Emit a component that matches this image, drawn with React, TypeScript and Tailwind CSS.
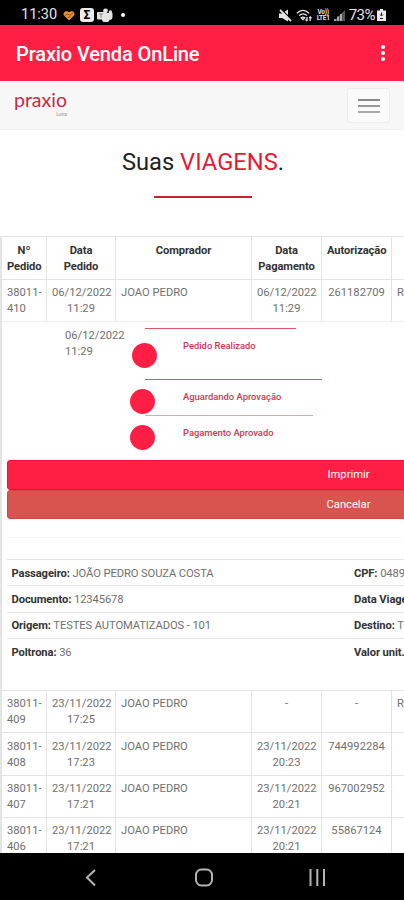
import { clsx } from 'clsx'

const columns = ['Nº Pedido', 'Data Pedido', 'Comprador', 'Data Pagamento', 'Autorização', '']

const currentOrder = ['38011-410', '06/12/2022 11:29', 'JOAO PEDRO', '06/12/2022 11:29', '261182709', 'R']

const orders = [
  ['38011-409', '23/11/2022 17:25', 'JOAO PEDRO', '-', '-', 'R'],
  ['38011-408', '23/11/2022 17:23', 'JOAO PEDRO', '23/11/2022 20:23', '744992284', ''],
  ['38011-407', '23/11/2022 17:21', 'JOAO PEDRO', '23/11/2022 20:21', '967002952', ''],
  ['38011-406', '23/11/2022 17:21', 'JOAO PEDRO', '23/11/2022 20:21', '55867124', ''],
]

const steps = [
  { label: 'Pedido Realizado', row: 'h-[51px]', line: 'w-[151px] bg-[#e0556b]', dot: '-ml-[13px] mr-[26px] mt-[14px]' },
  { label: 'Aguardando Aprovação', row: 'h-9', line: 'w-[177px] bg-[#d6566b]', dot: '-ml-[15px] mr-[28px] mt-[9px]' },
  { label: 'Pagamento Aprovado', row: 'h-[46px]', line: 'w-[168px] bg-[#f3a0ad]', dot: '-ml-[15px] mr-[28px] mt-[9px]' },
]

const details = [
  ['Passageiro:', 'JOÃO PEDRO SOUZA COSTA', 'CPF:', '0489'],
  ['Documento:', '12345678', 'Data Viagem:', ''],
  ['Origem:', 'TESTES AUTOMATIZADOS - 101', 'Destino:', 'TESTES'],
  ['Poltrona:', '36', 'Valor unit.:', ''],
]

function StatusBar() {
  return (
    <div className="flex h-[25px] shrink-0 items-center justify-between bg-black pl-[21px] pr-[18px] pt-[5px] text-[#e4e4e4]">
      <div className="flex items-center">
        <span className="w-[37px] text-[14.5px] leading-4">11:30</span>
        <svg viewBox="0 0 12 11" className="ml-[5px] h-[11px] w-3">
          <path d="M6 10.5 1 5.5C-.8 3.2 2.4-.8 6 2.3 9.6-.8 12.8 3.2 11 5.5Z" fill="#e8903c" />
          <path d="M2 5.5 5 3.8l1.5 1.5L10 3M4.5 8l3-2" stroke="#7a4210" strokeWidth=".8" fill="none" />
        </svg>
        <span className="ml-[5px] flex h-[14px] w-[14px] items-center justify-center rounded-[3px] bg-[#ececec] text-[12px] font-bold leading-none text-black">Σ</span>
        <svg viewBox="0 0 16 14" className="ml-[3px] h-[14px] w-4" fill="#e4e4e4">
          <circle cx="8.5" cy="2.8" r="2.4" />
          <circle cx="13.4" cy="4" r="1.7" />
          <path d="M5 5h10.5v4.5a3 3 0 0 1-3 2.5A4 4 0 0 1 5 12Z" />
          <rect y="4" width="8" height="7.5" rx="1" />
          <path d="M2 6h4M4 6v4" stroke="#888" strokeWidth="1" />
        </svg>
        <span className="ml-[8px] h-1 w-1 rounded-full bg-white" />
      </div>
      <div className="flex items-center">
        <svg viewBox="0 0 13 13" className="h-[13px] w-[13px]">
          <path d="M0 4.5h3L9 .5v12L3 9H0Z" fill="#e4e4e4" />
          <path d="m2 0 11 11" stroke="#000" strokeWidth="1.2" />
          <path d="m1 1 11 11" stroke="#e4e4e4" strokeWidth="1.8" />
        </svg>
        <svg viewBox="0 0 16 13" className="ml-[4px] h-[13px] w-4" fill="none" stroke="#e4e4e4" strokeWidth="1.3">
          <path d="M.8 4.2Q7-1.4 13.2 4.2M3 6.6Q7 3.2 11 6.6M5.2 8.8Q7 7.4 8.8 8.8L7 10.6Z" />
          <path d="M11 12V8m-1.5 2.5L11 12M14.2 8v4m-1-3 1-1 1.3 1.3" />
        </svg>
        <span className="ml-[4px] flex w-[15px] flex-col text-center text-[6.5px] font-bold leading-[6.5px] tracking-[-0.3px]">
          <span>Vo))</span>
          <span>LTE1</span>
        </span>
        <svg viewBox="0 0 11 11" className="ml-[3px] h-[11px] w-[11px]">
          <path d="M0 11 11 0v11Z" fill="#555" />
          <path d="M1 9v2M4 6.5V11M7 4v7" stroke="#bbb" strokeWidth="1.6" />
        </svg>
        <span className="ml-[4px] text-[15px] leading-4 tracking-[-0.5px]">73%</span>
        <svg viewBox="0 0 9 12" className="ml-[2px] h-3 w-[9px]">
          <path d="M3 0h3v1.5h3V12H0V1.5h3Z" fill="#ececec" />
          <path d="M4.5 3.5v3M3 5.5 4.5 7 6 5.5M3 9.5h3" stroke="#222" strokeWidth="1" fill="none" />
        </svg>
      </div>
    </div>
  )
}

function AppBar() {
  return (
    <header className="flex h-14 shrink-0 items-center justify-between bg-[#ff1f44] pl-4 pr-[19px] text-white">
      <h1 className="pt-px text-[20px] font-medium leading-6 tracking-[-0.12px]">Praxio Venda OnLine</h1>
      <div className="flex flex-col gap-[2px]">
        <span className="h-1 w-1 rounded-full bg-white" />
        <span className="h-1 w-1 rounded-full bg-white" />
        <span className="h-1 w-1 rounded-full bg-white" />
      </div>
    </header>
  )
}

function NavBar() {
  return (
    <nav className="flex h-[49px] shrink-0 items-start justify-between border-b border-[#f1f1f1] bg-[#f7f7f7] pl-[14px] pr-[14px] pt-[7px]">
      <div className="flex w-[53px] flex-col">
        <span className="pt-px font-['Lato'] text-[19.5px] leading-[22px] text-[#cc2846]">praxio</span>
        <span className="self-end text-[5px] leading-[6px] text-[#999]">Luna</span>
      </div>
      <button className="flex h-[35px] w-[43px] flex-col items-center justify-center gap-[4px] rounded-[3px] border border-[#ececec] bg-[#fafafa]">
        <span className="h-[2px] w-[22px] bg-[#888]" />
        <span className="h-[2px] w-[22px] bg-[#999]" />
        <span className="h-[2px] w-[22px] bg-[#aaa]" />
      </button>
    </nav>
  )
}

function Row({ cells, head }: { cells: string[]; head?: boolean }) {
  return (
    <div
      className={clsx(
        'grid h-[42.4px] grid-cols-[45px_69px_136px_70px_70px_140px] border-t border-[#e4e4e4] leading-4',
        head ? 'font-bold tracking-[-0.1px] text-[#333]' : 'text-[#707070]'
      )}
    >
      {cells.map((cell, i) => (
        <div
          key={i}
          className={clsx(
            'border-r border-[#e4e4e4] px-[5px] pt-[5.5px]',
            (head || i === 1 || i === 3 || i === 4) && 'text-center',
            head && 'px-0'
          )}
        >
          {cell}
        </div>
      ))}
    </div>
  )
}

function Timeline() {
  return (
    <div className="flex h-[139px] border-t border-[#ececec] pt-[5.5px] text-[#707070]">
      <div className="ml-[63px] w-20 pr-4 leading-4">06/12/2022 11:29</div>
      <div>
        {steps.map((step) => (
          <div key={step.label} className={step.row}>
            <div className={clsx('h-[1.5px]', step.line)} />
            <div className="flex">
              <div className={clsx('h-[25px] w-[25px] shrink-0 rounded-full bg-[#ff1f44]', step.dot)} />
              <div className="-mr-40 w-40 pt-[11px] text-[9.4px] font-medium leading-3 text-[#d63453]">{step.label}</div>
            </div>
          </div>
        ))}
      </div>
    </div>
  )
}

function Details() {
  return (
    <div className="ml-[5px] w-[683px] pt-[0.3px]">
      <button className="block h-[29.3px] w-full rounded-[3px] border border-[#ee1237] bg-[#ff1f44] pt-px text-white">Imprimir</button>
      <button className="block h-[29.3px] w-full rounded-[3px] border border-[#d3463f] bg-[#d9534f] pt-px text-white">Cancelar</button>
      <div className="mt-[18px] h-[22px] border-t border-[#f6f6f6]" />
      {details.map(([label, value, label2, value2]) => (
        <div key={label} className="grid h-[26.4px] grid-cols-[342.5px_1fr] border-t border-[#e4e4e4] px-[4.5px] pt-[5.5px] leading-4 tracking-[-0.1px] text-[#707070]">
          <div><b className="text-[#333]">{label}</b> {value}</div>
          <div><b className="text-[#333]">{label2}</b> {value2}</div>
        </div>
      ))}
    </div>
  )
}

function SystemNav() {
  return (
    <div className="h-[47px] shrink-0 bg-black">
      <svg viewBox="0 0 404 47" className="h-[47px] w-[404px]" fill="none" stroke="#b4b4b4" strokeWidth="2">
        <path d="m95 17-8 7.5 8 8" />
        <rect x="196" y="16.5" width="16" height="16" rx="5.5" />
        <path d="M310.5 16v17M317.3 16v17M324 16v17" />
      </svg>
    </div>
  )
}

export default function App() {
  return (
    <div className="flex h-[900px] w-[404px] flex-col overflow-hidden bg-white font-['Roboto','Liberation_Sans',sans-serif]">
      <StatusBar />
      <AppBar />
      <NavBar />
      <main className="min-h-0 flex-1 overflow-hidden">
        <div className="flex h-[106.4px] flex-col items-center pl-[2px] pt-4">
          <h2 className="text-[23.7px] leading-8 text-[#222]">
            Suas <span className="text-[#e91835]">VIAGENS</span>.
          </h2>
          <div className="mt-[17.6px] h-[2px] w-[98px] bg-[#d0202c]" />
        </div>
        <div className="w-[535px] border-l-2 border-[#e4e4e4] text-[11.2px]">
          <Row cells={columns} head />
          <Row cells={currentOrder} />
          <Timeline />
          <Details />
          <div className="h-[25.2px]" />
          {orders.map((order) => (
            <Row key={order[0]} cells={order} />
          ))}
        </div>
      </main>
      <SystemNav />
    </div>
  )
}
